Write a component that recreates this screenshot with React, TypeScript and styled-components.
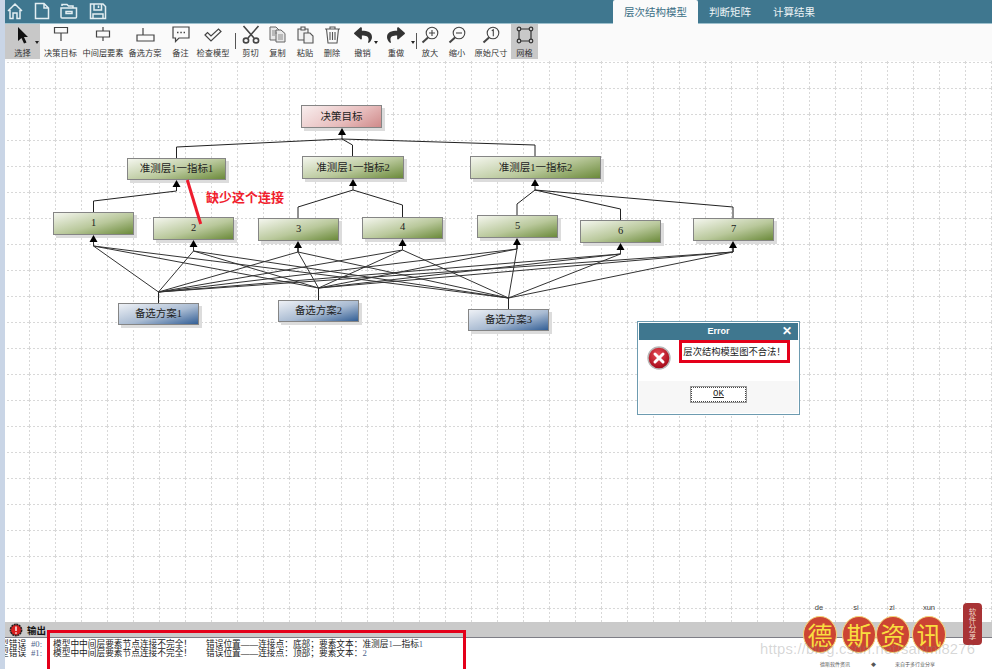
import React from 'react';
import styled, { createGlobalStyle } from 'styled-components';
import { FaReply, FaShare } from 'react-icons/fa';

const CJK = `'Noto Sans CJK SC', 'Noto Sans', sans-serif`;
const MIXED = `'Liberation Serif', 'Noto Sans CJK SC', serif`;
const TEAL = '#3f778f';

const GlobalStyle = createGlobalStyle`
  html, body {
    margin: 0;
    padding: 0;
    height: 100%;
    overflow: hidden;
    background: #fff;
  }
`;

const Page = styled.div`
  display: flex;
  width: 992px;
  height: 669px;
  overflow: hidden;
  position: relative;
  font-family: ${CJK};
`;

const LeftStrip = styled.div`
  width: 5px;
  flex: none;
  background: #c9d5e6;
`;

const Main = styled.div`
  flex: 1;
  min-width: 0;
  display: flex;
  flex-direction: column;
`;

const TopBar = styled.div`
  height: 23px;
  flex: none;
  background: ${TEAL};
  border-bottom: 1px solid #9dc0cd;
  display: flex;
  justify-content: space-between;
  padding: 0 166px 0 2px;
`;

const QuickIcons = styled.div`
  display: flex;
  align-items: flex-start;
  gap: 10.5px;
  padding-top: 2px;
`;

const Tabs = styled.div`
  display: flex;
`;

const Tab = styled.div<{ $active?: boolean }>`
  padding: 0 11px;
  height: ${(p) => (p.$active ? 24 : 23)}px;
  line-height: 23px;
  font-size: 10.5px;
  border-radius: 2px 2px 0 0;
  color: ${(p) => (p.$active ? '#3b6e85' : '#eef4f6')};
  background: ${(p) => (p.$active ? '#fafafa' : 'transparent')};
`;

const Toolbar = styled.div`
  height: 37px;
  flex: none;
  background: #fafafa;
  display: flex;
  align-items: flex-start;
`;

const Tool = styled.div<{ $w: number; $active?: boolean }>`
  width: ${(p) => p.$w}px;
  height: 35px;
  flex: none;
  display: flex;
  flex-direction: column;
  align-items: center;
  background: ${(p) => (p.$active ? '#c8c8c8' : 'transparent')};
  position: relative;
`;

const ToolIcon = styled.div`
  height: 23px;
  display: flex;
  align-items: center;
  justify-content: center;
  color: #333;
`;

const ToolLabel = styled.span`
  font-size: 8.2px;
  line-height: 14px;
  color: #333;
  white-space: nowrap;
`;

const Caret = styled.i<{ $right: number }>`
  position: absolute;
  top: 17px;
  right: ${(p) => p.$right}px;
  border: 2.5px solid transparent;
  border-top: 3px solid #222;
  border-bottom: 0;
`;

const Sep = styled.div<{ $gap: number }>`
  width: 1px;
  height: 16px;
  margin: 9px ${(p) => p.$gap}px 0;
  background: #555;
  flex: none;
`;

const Canvas = styled.div`
  flex: 1;
  min-height: 0;
  position: relative;
  background: #fff;
  overflow: hidden;
`;

const Diagram = styled.svg`
  position: absolute;
  inset: 0;
  width: 100%;
  height: 100%;
`;

const NODE_COLORS = {
  goal: 'linear-gradient(150deg, #f8eeee 0%, #e7bcbc 60%, #cf8a8a 100%)',
  mid: 'linear-gradient(165deg, #f4f6ee 0%, #b9c89b 55%, #6b8a3a 100%)',
  alt: 'linear-gradient(165deg, #eef1f6 0%, #a9bbd2 55%, #335f96 100%)',
};

const Node = styled.div<{ $x: number; $y: number; $w: number; $h: number; $kind: keyof typeof NODE_COLORS }>`
  position: absolute;
  left: ${(p) => p.$x - 5}px;
  top: ${(p) => p.$y - 61}px;
  width: ${(p) => p.$w}px;
  height: ${(p) => p.$h}px;
  box-sizing: border-box;
  border: 1px solid #858585;
  box-shadow: 3px 3px 0 #dcdcdc;
  background: ${(p) => NODE_COLORS[p.$kind]};
  padding-bottom: 3px;
  display: flex;
  align-items: center;
  justify-content: center;
  font-family: ${MIXED};
  font-size: 10.5px;
  color: #222;
  white-space: nowrap;
`;

const Note = styled.div`
  position: absolute;
  left: 201px;
  top: 127px;
  font-size: 13px;
  line-height: 18px;
  font-weight: 700;
  color: #f0202c;
`;

const Dialog = styled.div`
  position: absolute;
  left: 632px;
  top: 260px;
  width: 163px;
  height: 94px;
  box-sizing: border-box;
  border: 1px solid #6d9bb0;
  padding: 1px;
  background: #fff;
  display: flex;
  flex-direction: column;
`;

const DialogTitle = styled.div`
  height: 17px;
  flex: none;
  background: ${TEAL};
  color: #fff;
  font-family: 'Liberation Sans', sans-serif;
  font-size: 9px;
  font-weight: 700;
  line-height: 17px;
  text-align: center;
  position: relative;
`;

const DialogClose = styled.span`
  position: absolute;
  right: 6px;
  top: 0;
  font-size: 12px;
`;

const DialogBody = styled.div`
  height: 41px;
  flex: none;
  display: flex;
  align-items: flex-start;
  padding: 6px 0 0 8px;
  box-sizing: border-box;
  gap: 8px;
`;

const DialogMessage = styled.div`
  width: 111px;
  height: 23px;
  margin-top: -6px;
  box-sizing: border-box;
  border: 3px solid #e4001a;
  font-size: 9.3px;
  line-height: 17px;
  color: #222;
  text-align: center;
  white-space: nowrap;
`;

const DialogFooter = styled.div`
  flex: 1;
  background: #f7f7f7;
  display: flex;
  justify-content: center;
  padding-top: 5px;
`;

const OkButton = styled.div`
  width: 57px;
  height: 17px;
  box-sizing: border-box;
  border: 1px solid #999;
  outline: 1px dotted #444;
  outline-offset: -2px;
  background: #fff;
  font-family: 'Liberation Mono', monospace;
  font-size: 9px;
  line-height: 15px;
  text-align: center;
  color: #222;
  text-decoration: underline;
`;

const OutputPanel = styled.div`
  height: 47px;
  flex: none;
  background: #fff;
  position: relative;
  overflow: hidden;
`;

const OutputHeader = styled.div`
  height: 15px;
  background: #cacaca;
  border-bottom: 1px solid #7e7e86;
  display: flex;
  align-items: center;
  padding-left: 4px;
  gap: 4px;
  font-size: 9.5px;
  font-weight: 700;
  color: #111;
`;

const OutputList = styled.div`
  padding-top: 2px;
  margin-left: -5px;
`;

const OutputRow = styled.div`
  display: flex;
  height: 9px;
  font-family: ${MIXED};
  font-size: 8.7px;
  line-height: 9px;
  color: #222;
  white-space: nowrap;
`;

const RowKind = styled.span`
  width: 31px;
  padding-right: 5px;
  box-sizing: border-box;
  text-align: right;
  flex: none;
`;

const RowIndex = styled.span`
  width: 22px;
  flex: none;
  color: #4c5f8a;
`;

const RowText = styled.span`
  width: 153px;
  flex: none;
`;

const Digit = styled.span`
  color: #4c5f8a;
`;

const RedFrame = styled.div`
  position: absolute;
  left: 42px;
  top: 8px;
  width: 419px;
  height: 60px;
  border: 3px solid #e4001a;
  box-sizing: border-box;
`;

const Brand = styled.div`
  position: absolute;
  right: 0;
  bottom: 0;
  width: 232px;
  height: 70px;
  pointer-events: none;
`;

const Seal = styled.div<{ $x: number }>`
  position: absolute;
  left: ${(p) => p.$x - 760 - 17}px;
  top: 17px;
  width: 34px;
  height: 37px;
  box-sizing: border-box;
  border-radius: 50%;
  background: #cc4433;
  border: 1px solid #f4d67a;
  color: #f9dd3f;
  font-size: 25px;
  line-height: 34px;
  text-align: center;
`;

const Pinyin = styled.span<{ $x: number }>`
  position: absolute;
  left: ${(p) => p.$x - 780}px;
  width: 40px;
  top: 4px;
  text-align: center;
  font-family: 'Liberation Sans', sans-serif;
  font-size: 7.5px;
  color: #444;
`;

const Badge = styled.div`
  position: absolute;
  left: 203px;
  top: 4px;
  width: 19px;
  height: 42px;
  border-radius: 4px;
  background: #a83335;
  color: #f0d9c8;
  font-size: 7.5px;
  line-height: 19px;
  letter-spacing: 0.5px;
  text-align: center;
  writing-mode: vertical-rl;
`;

const Url = styled.div`
  position: absolute;
  left: 0;
  top: 42px;
  font-family: 'Liberation Sans', sans-serif;
  font-size: 14.8px;
  letter-spacing: 0.2px;
  color: rgba(130, 130, 130, 0.32);
  white-space: nowrap;
`;

const BrandFoot = styled.span<{ $x: number }>`
  position: absolute;
  left: ${(p) => p.$x - 760}px;
  top: 61px;
  font-size: 5px;
  line-height: 7px;
  color: #555;
  white-space: nowrap;
`;

// ---- data, in page coordinates (the diagram is a free canvas)
const nodes = [
  { kind: 'goal', x: 301, y: 105, w: 81, h: 23, text: '决策目标' },
  { kind: 'mid', x: 127, y: 158, w: 99, h: 22, text: '准测层1一指标1' },
  { kind: 'mid', x: 302, y: 156, w: 102, h: 23, text: '准测层1一指标2' },
  { kind: 'mid', x: 470, y: 156, w: 131, h: 23, text: '准测层1一指标2' },
  { kind: 'mid', x: 53, y: 212, w: 81, h: 23, text: '1' },
  { kind: 'mid', x: 153, y: 217, w: 81, h: 23, text: '2' },
  { kind: 'mid', x: 258, y: 218, w: 81, h: 23, text: '3' },
  { kind: 'mid', x: 362, y: 217, w: 81, h: 22, text: '4' },
  { kind: 'mid', x: 477, y: 215, w: 81, h: 23, text: '5' },
  { kind: 'mid', x: 580, y: 220, w: 81, h: 23, text: '6' },
  { kind: 'mid', x: 693, y: 218, w: 81, h: 23, text: '7' },
  { kind: 'alt', x: 118, y: 303, w: 81, h: 22, text: '备选方案1' },
  { kind: 'alt', x: 278, y: 300, w: 81, h: 22, text: '备选方案2' },
  { kind: 'alt', x: 468, y: 309, w: 81, h: 22, text: '备选方案3' },
] as const;

const arrows = [
  [342, 128],
  [176.5, 180],
  [353, 179],
  [535, 179],
  [93.5, 235],
  [193.5, 240],
  [298, 241],
  [402.5, 239],
  [517, 238],
  [620.5, 243],
  [733, 241],
];

const links = [
  '342,134 342,139 176.5,147 176.5,158',
  '342,139 352.5,145 352.5,156',
  '342,139 535,145 535,156',
  '176.5,186 176.5,191 93.5,201 93.5,212',
  '353,185 353,190 298,207 298,218',
  '353,190 402.5,205 402.5,217',
  '535,185 535,190 517,204 517,215',
  '535,190 620.5,209 620.5,220',
  '535,190 733,207 733,218',
];

const sources = [
  [158.5, 292, 303],
  [318.5, 288, 300],
  [508.5, 298, 309],
];

const targets = [
  [93.5, 246],
  [193.5, 251],
  [298, 252],
  [402.5, 250],
  [517, 249],
  [620.5, 254],
  [733, 252],
];

const seals = [
  { x: 820, label: '德', pinyin: 'de', px: 819 },
  { x: 859, label: '斯', pinyin: 'si', px: 856 },
  { x: 893, label: '资', pinyin: 'zi', px: 892 },
  { x: 929, label: '讯', pinyin: 'xun', px: 929 },
];

function HomeIcon() {
  return (
    <svg width="16" height="18" viewBox="0 0 16 18" fill="none" stroke="#e3eef2" strokeWidth="1.5">
      <path d="M1 9 L8 2 L15 9 M3 8 V16.5 H6 V11 H10 V16.5 H13 V8 M5 5 L8 2 L11 5" />
    </svg>
  );
}

function FileIcon() {
  return (
    <svg width="16" height="18" viewBox="0 0 16 18" fill="none" stroke="#e3eef2" strokeWidth="1.5">
      <path d="M1.5 1.5 H10 L14.5 6 V16.5 H1.5 Z M10 1.5 V6 H14.5" />
    </svg>
  );
}

function FolderIcon() {
  return (
    <svg width="18" height="18" viewBox="0 0 18 18" fill="none" stroke="#e3eef2" strokeWidth="1.5">
      <path d="M2 4 V2.5 H7 L8.5 4 H13 V6 M1 6 H16.5 V15 Q16.5 16 15.5 16 H2 Q1 16 1 15 Z M6 9.5 H12 V11.5 H6 Z" />
    </svg>
  );
}

function SaveIcon() {
  return (
    <svg width="18" height="18" viewBox="0 0 18 18" fill="none" stroke="#e3eef2" strokeWidth="1.5">
      <path d="M1.5 2 H14 L16.5 4.5 V16.5 H1.5 Z M5 2 V8 H12.5 V2 M9.5 3.5 V6 M4 16.5 V12 H14 V16.5" />
    </svg>
  );
}

const toolStroke = { fill: 'none', stroke: '#444', strokeWidth: 1.2 };

function PointerIcon() {
  return (
    <svg width="14" height="18" viewBox="0 0 14 18">
      <path d="M2 1 L12 11 H8 L10.5 16.5 L8 17.5 L5.5 12 L2 15 Z" fill="#111" />
    </svg>
  );
}

function ShapeIcon({ d }: { d: string }) {
  return (
    <svg width="20" height="18" viewBox="0 0 20 18" {...toolStroke}>
      <path d={d} />
    </svg>
  );
}

function NoteIcon() {
  return (
    <svg width="18" height="17" viewBox="0 0 18 17" {...toolStroke}>
      <path d="M1 1 H17 V12 H7 L3.5 15.5 V12 H1 Z" />
      <path d="M5 6.5 H6.5 M8.3 6.5 H9.8 M11.6 6.5 H13" strokeWidth="1.4" />
    </svg>
  );
}

function CheckIcon() {
  return (
    <svg width="18" height="14" viewBox="0 0 18 14" {...toolStroke}>
      <path d="M1 7 L3.5 4.5 L7 8 L14.5 1 L17 3.5 L7 13 Z" />
    </svg>
  );
}

function CutIcon() {
  return (
    <svg width="18" height="19" viewBox="0 0 18 19" fill="none" stroke="#444" strokeWidth="1.6">
      <path d="M1.5 1 L12 13 M16.5 1 L6 13" />
      <ellipse cx="4" cy="15.5" rx="2.6" ry="2.4" />
      <ellipse cx="14" cy="15.5" rx="2.6" ry="2.4" />
    </svg>
  );
}

function CopyIcon() {
  return (
    <svg width="17" height="17" viewBox="0 0 17 17" fill="#e8e8e8" stroke="#666">
      <path d="M1 1 H7 L10 4 V14 H1 Z" />
      <path d="M7 4 H12 L16 7.5 V16 H7 Z" />
      <path d="M3 5 H7 M3 7 H8 M3 9 H6 M9 9 H14 M9 11 H14 M9 13 H14" strokeWidth="0.7" />
    </svg>
  );
}

function PasteIcon() {
  return (
    <svg width="17" height="18" viewBox="0 0 17 18" fill="#f2f2f2" stroke="#555" strokeWidth="1.1">
      <path d="M1 3 H11 V14 H1 Z" />
      <path d="M4 1 H8 V4 H4 Z" />
      <path d="M7 7 H13 L16 10 V17 H7 Z" />
    </svg>
  );
}

function TrashIcon() {
  return (
    <svg width="17" height="18" viewBox="0 0 17 18" fill="none" stroke="#555" strokeWidth="1.1">
      <path d="M1 3 H16 M6 3 V1 H11 V3 M2.5 3 L4 17 H13 L14.5 3" />
      <path d="M6 6 V14 M8.5 6 V14 M11 6 V14" />
    </svg>
  );
}

function LensIcon({ children }: { children?: React.ReactNode }) {
  return (
    <svg width="18" height="18" viewBox="0 0 18 18" fill="none" stroke="#444" strokeWidth="1.1">
      <circle cx="11" cy="7" r="5.8" />
      <path d="M7 11.5 L1.5 16.5" strokeWidth="2" />
      {children}
    </svg>
  );
}

function GridIcon() {
  return (
    <svg width="18" height="18" viewBox="0 0 18 18" fill="none" stroke="#333" strokeWidth="1.2">
      <path d="M3 3 H15 V15 H3 Z" />
      <g fill="#ccc">
        <circle cx="3" cy="3" r="1.8" />
        <circle cx="15" cy="3" r="1.8" />
        <circle cx="3" cy="15" r="1.8" />
        <circle cx="15" cy="15" r="1.8" />
      </g>
    </svg>
  );
}

function ErrorIcon() {
  return (
    <svg width="24" height="24" viewBox="0 0 24 24">
      <defs>
        <radialGradient id="err" cx="45%" cy="35%" r="70%">
          <stop offset="0%" stopColor="#e8505a" />
          <stop offset="100%" stopColor="#9c0010" />
        </radialGradient>
      </defs>
      <circle cx="12" cy="12" r="11" fill="url(#err)" stroke="#b8b8b8" strokeWidth="1.4" />
      <path d="M8 8 L16 16 M16 8 L8 16" stroke="#fff" strokeWidth="3" strokeLinecap="round" />
    </svg>
  );
}

function AlertIcon() {
  return (
    <svg width="14" height="14" viewBox="0 0 14 14">
      <circle cx="7" cy="7" r="5.6" fill="#d81e1e" stroke="#222" strokeWidth="1.6" strokeDasharray="2 0.6" />
      <path d="M7 3.4 V8 M7 9.2 V10.8" stroke="#fff" strokeWidth="1.4" />
    </svg>
  );
}

export default function App() {
  return (
    <Page>
      <GlobalStyle />
      <LeftStrip />
      <Main>
        <TopBar>
          <QuickIcons>
            <HomeIcon />
            <FileIcon />
            <FolderIcon />
            <SaveIcon />
          </QuickIcons>
          <Tabs>
            <Tab $active>层次结构模型</Tab>
            <Tab>判断矩阵</Tab>
            <Tab>计算结果</Tab>
          </Tabs>
        </TopBar>

        <Toolbar>
          <Tool $w={35} $active>
            <ToolIcon><PointerIcon /></ToolIcon>
            <ToolLabel>选择</ToolLabel>
            <Caret $right={1} />
          </Tool>
          <Tool $w={41}>
            <ToolIcon><ShapeIcon d="M3.5 1.5 H16.5 V7 H3.5 Z M10 7 V15" /></ToolIcon>
            <ToolLabel>决策目标</ToolLabel>
          </Tool>
          <Tool $w={44}>
            <ToolIcon><ShapeIcon d="M3.5 5 H16.5 V11 H3.5 Z M10 1 V5 M10 11 V15" /></ToolIcon>
            <ToolLabel>中间层要素</ToolLabel>
          </Tool>
          <Tool $w={40}>
            <ToolIcon><ShapeIcon d="M2 9 H19 V15 H2 Z M8 2 V9" /></ToolIcon>
            <ToolLabel>备选方案</ToolLabel>
          </Tool>
          <Tool $w={31}>
            <ToolIcon><NoteIcon /></ToolIcon>
            <ToolLabel>备注</ToolLabel>
          </Tool>
          <Tool $w={34}>
            <ToolIcon><CheckIcon /></ToolIcon>
            <ToolLabel>检查模型</ToolLabel>
          </Tool>
          <Sep $gap={5} />
          <Tool $w={19}>
            <ToolIcon><CutIcon /></ToolIcon>
            <ToolLabel>剪切</ToolLabel>
          </Tool>
          <Tool $w={35}>
            <ToolIcon><CopyIcon /></ToolIcon>
            <ToolLabel>复制</ToolLabel>
          </Tool>
          <Tool $w={20}>
            <ToolIcon><PasteIcon /></ToolIcon>
            <ToolLabel>粘贴</ToolLabel>
          </Tool>
          <Tool $w={34}>
            <ToolIcon><TrashIcon /></ToolIcon>
            <ToolLabel>删除</ToolLabel>
          </Tool>
          <Tool $w={27}>
            <ToolIcon><FaReply size={18} /></ToolIcon>
            <ToolLabel>撤销</ToolLabel>
            <Caret $right={-2} />
          </Tool>
          <Tool $w={40}>
            <ToolIcon><FaShare size={18} /></ToolIcon>
            <ToolLabel>重做</ToolLabel>
            <Caret $right={1} />
          </Tool>
          <Sep $gap={0} />
          <Tool $w={26}>
            <ToolIcon>
              <LensIcon><path d="M8 7 H14 M11 4 V10" /></LensIcon>
            </ToolIcon>
            <ToolLabel>放大</ToolLabel>
          </Tool>
          <Tool $w={28}>
            <ToolIcon>
              <LensIcon><path d="M8 7 H14" /></LensIcon>
            </ToolIcon>
            <ToolLabel>缩小</ToolLabel>
          </Tool>
          <Tool $w={40}>
            <ToolIcon>
              <LensIcon><path d="M9.8 4.8 L11.3 3.8 V10.2" /></LensIcon>
            </ToolIcon>
            <ToolLabel>原始尺寸</ToolLabel>
          </Tool>
          <Tool $w={27} $active>
            <ToolIcon><GridIcon /></ToolIcon>
            <ToolLabel>网格</ToolLabel>
          </Tool>
        </Toolbar>

        <Canvas>
          <Diagram viewBox="5 61 987 561" preserveAspectRatio="xMinYMin slice">
            <defs>
              <pattern id="grid" x="3" y="10" width="26" height="26" patternUnits="userSpaceOnUse">
                <path d="M0.5 0 V26 M0 0.5 H26" stroke="#d8d8d8" strokeWidth="1" strokeDasharray="2 2" fill="none" />
              </pattern>
            </defs>
            <rect x="5" y="61" width="987" height="561" fill="url(#grid)" />
          </Diagram>

          {nodes.map((node) => (
            <Node key={`${node.x}-${node.y}`} $kind={node.kind} $x={node.x} $y={node.y} $w={node.w} $h={node.h}>
              {node.text}
            </Node>
          ))}

          <Diagram viewBox="5 61 987 561" preserveAspectRatio="xMinYMin slice">
            <g fill="none" stroke="#222" strokeWidth="1">
              {links.map((points) => (
                <polyline key={points} points={points} />
              ))}
              {sources.map(([sx, sy, top]) => (
                <g key={sx}>
                  <line x1={sx} y1={sy} x2={sx} y2={top} />
                  {targets.map(([tx, ty]) => (
                    <polyline key={tx} points={`${sx},${sy} ${tx},${ty} ${tx},${ty - 5}`} stroke="#333" />
                  ))}
                </g>
              ))}
            </g>
            {arrows.map(([x, y]) => (
              <polygon key={x} points={`${x},${y} ${x - 4},${y + 7} ${x + 4},${y + 7}`} fill="#000" />
            ))}
            <line x1="187.3" y1="180" x2="200.7" y2="224" stroke="#ee1c2e" strokeWidth="3" />
          </Diagram>

          <Note>缺少这个连接</Note>

          <Dialog>
            <DialogTitle>
              Error
              <DialogClose>✕</DialogClose>
            </DialogTitle>
            <DialogBody>
              <ErrorIcon />
              <DialogMessage>层次结构模型图不合法！</DialogMessage>
            </DialogBody>
            <DialogFooter>
              <OkButton>OK</OkButton>
            </DialogFooter>
          </Dialog>
        </Canvas>

        <OutputPanel>
          <OutputHeader>
            <AlertIcon />
            输出
          </OutputHeader>
          <OutputList>
            <OutputRow>
              <RowKind>型错误</RowKind>
              <RowIndex>#0:</RowIndex>
              <RowText>模型中中间层要素节点连接不完全！</RowText>
              错误位置——连接点：底部；要素文本：准测层<Digit>1</Digit>—指标<Digit>1</Digit>
            </OutputRow>
            <OutputRow>
              <RowKind>型错误</RowKind>
              <RowIndex>#1:</RowIndex>
              <RowText>模型中中间层要素节点连接不完全！</RowText>
              错误位置——连接点：顶部；要素文本：<Digit>2</Digit>
            </OutputRow>
          </OutputList>
          <RedFrame />
        </OutputPanel>
      </Main>

      <Brand>
        {seals.map((seal) => (
          <React.Fragment key={seal.label}>
            <Pinyin $x={seal.px}>{seal.pinyin}</Pinyin>
            <Seal $x={seal.x}>{seal.label}</Seal>
          </React.Fragment>
        ))}
        <Badge>软件分享</Badge>
        <Url>https://blog.csdn.net/sanmi8276</Url>
        <BrandFoot $x={820}>德斯软件资讯</BrandFoot>
        <BrandFoot $x={871}>◆</BrandFoot>
        <BrandFoot $x={895}>来自于多行业分享</BrandFoot>
      </Brand>
    </Page>
  );
}
